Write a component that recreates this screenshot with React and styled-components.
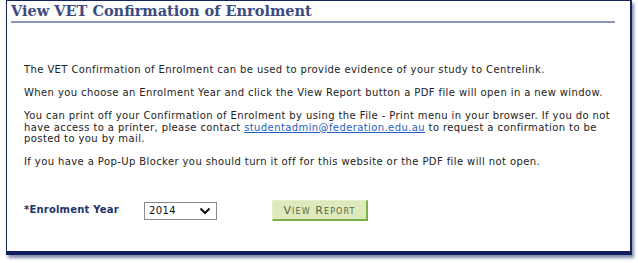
import React from 'react';
import styled, { createGlobalStyle } from 'styled-components';

const GlobalStyle = createGlobalStyle`
    html, body {
        margin: 0;
        padding: 0;
        background: #ffffff;
    }
`;

// Styles
const Page = styled.div`
    width: 638px;
    height: 263px;
    padding-left: 6px;
    box-sizing: border-box;
`;

const Panel = styled.div`
    width: 626px;
    height: 255px;
    box-sizing: border-box;
    border: 1px solid #14245c;
    border-right-width: 2px;
    border-bottom: 4px solid #0e1f5c;
    box-shadow: 2px 3px 3px rgba(30, 45, 100, 0.55);
    padding: 0 15px 0 4px;
    display: flex;
    flex-direction: column;
`;

const Title = styled.h1`
    margin: 0;
    padding: 1px 0 1px 0;
    font-family: "DejaVu Serif", "Liberation Serif", serif;
    font-weight: bold;
    font-size: 14.5px;
    line-height: 18px;
    color: #3c4b7e;
    border-bottom: 2px solid #8d97b8;
`;

const Body = styled.div`
    padding: 41px 0 0 13px;
    font-family: "DejaVu Sans", Verdana, sans-serif;
    font-size: 10px;
    letter-spacing: 0.4px;
    line-height: 11.5px;
    color: #222222;
`;

const Para = styled.p`
    margin: 0 0 11.5px 0;
`;

const Line = styled.span`
    display: block;
    white-space: nowrap;
`;

const Mail = styled.a`
    color: #1f5fc4;
    text-decoration: underline;
`;

const FormRow = styled.div`
    display: flex;
    align-items: center;
    margin-top: 21px;
    padding-left: 13px;
`;

const Label = styled.label`
    width: 120px;
    font-family: "DejaVu Sans", Verdana, sans-serif;
    font-size: 10px;
    font-weight: bold;
    letter-spacing: 0.2px;
    color: #1c3468;
    margin-top: -2px;
`;

const SelectBox = styled.div`
    width: 73px;
    height: 18px;
    box-sizing: border-box;
    border: 1px solid #8a8a8a;
    display: flex;
    align-items: center;
    justify-content: space-between;
    padding: 0 5px 0 4px;
    font-family: "DejaVu Sans", Verdana, sans-serif;
    font-size: 10px;
    letter-spacing: 0.4px;
    color: #111111;
`;

const Button = styled.button`
    margin-left: 55px;
    width: 96px;
    height: 21px;
    box-sizing: border-box;
    background: #deeabb;
    border: 1px solid #e6efcc;
    border-right: 2px solid #7cae4a;
    border-bottom: 2px solid #7cae4a;
    padding: 0;
    font-family: "DejaVu Sans", Verdana, sans-serif;
    font-size: 11px;
    font-variant: small-caps;
    letter-spacing: 1.1px;
    color: #4f6a46;
`;

const Chevron = () => (
    <svg width="12" height="8" viewBox="0 0 12 8">
        <path d="M1.5 1.5 L6 6 L10.5 1.5" fill="none" stroke="#111" strokeWidth="2" />
    </svg>
);

export default function App() {
    return (
        <Page>
            <GlobalStyle />
            <Panel>
                <Title>View VET Confirmation of Enrolment</Title>
                <Body>
                    <Para>The VET Confirmation of Enrolment can be used to provide evidence of your study to Centrelink.</Para>
                    <Para>When you choose an Enrolment Year and click the View Report button a PDF file will open in a new window.</Para>
                    <Para>
                        <Line>You can print off your Confirmation of Enrolment by using the File - Print menu in your browser. If you do not</Line>
                        <Line>have access to a printer, please contact <Mail href="#">studentadmin@federation.edu.au</Mail> to request a confirmation to be</Line>
                        <Line>posted to you by mail.</Line>
                    </Para>
                    <Para>If you have a Pop-Up Blocker you should turn it off for this website or the PDF file will not open.</Para>
                </Body>
                <FormRow>
                    <Label>*Enrolment Year</Label>
                    <SelectBox>
                        <span>2014</span>
                        <Chevron />
                    </SelectBox>
                    <Button>View Report</Button>
                </FormRow>
            </Panel>
        </Page>
    );
}
